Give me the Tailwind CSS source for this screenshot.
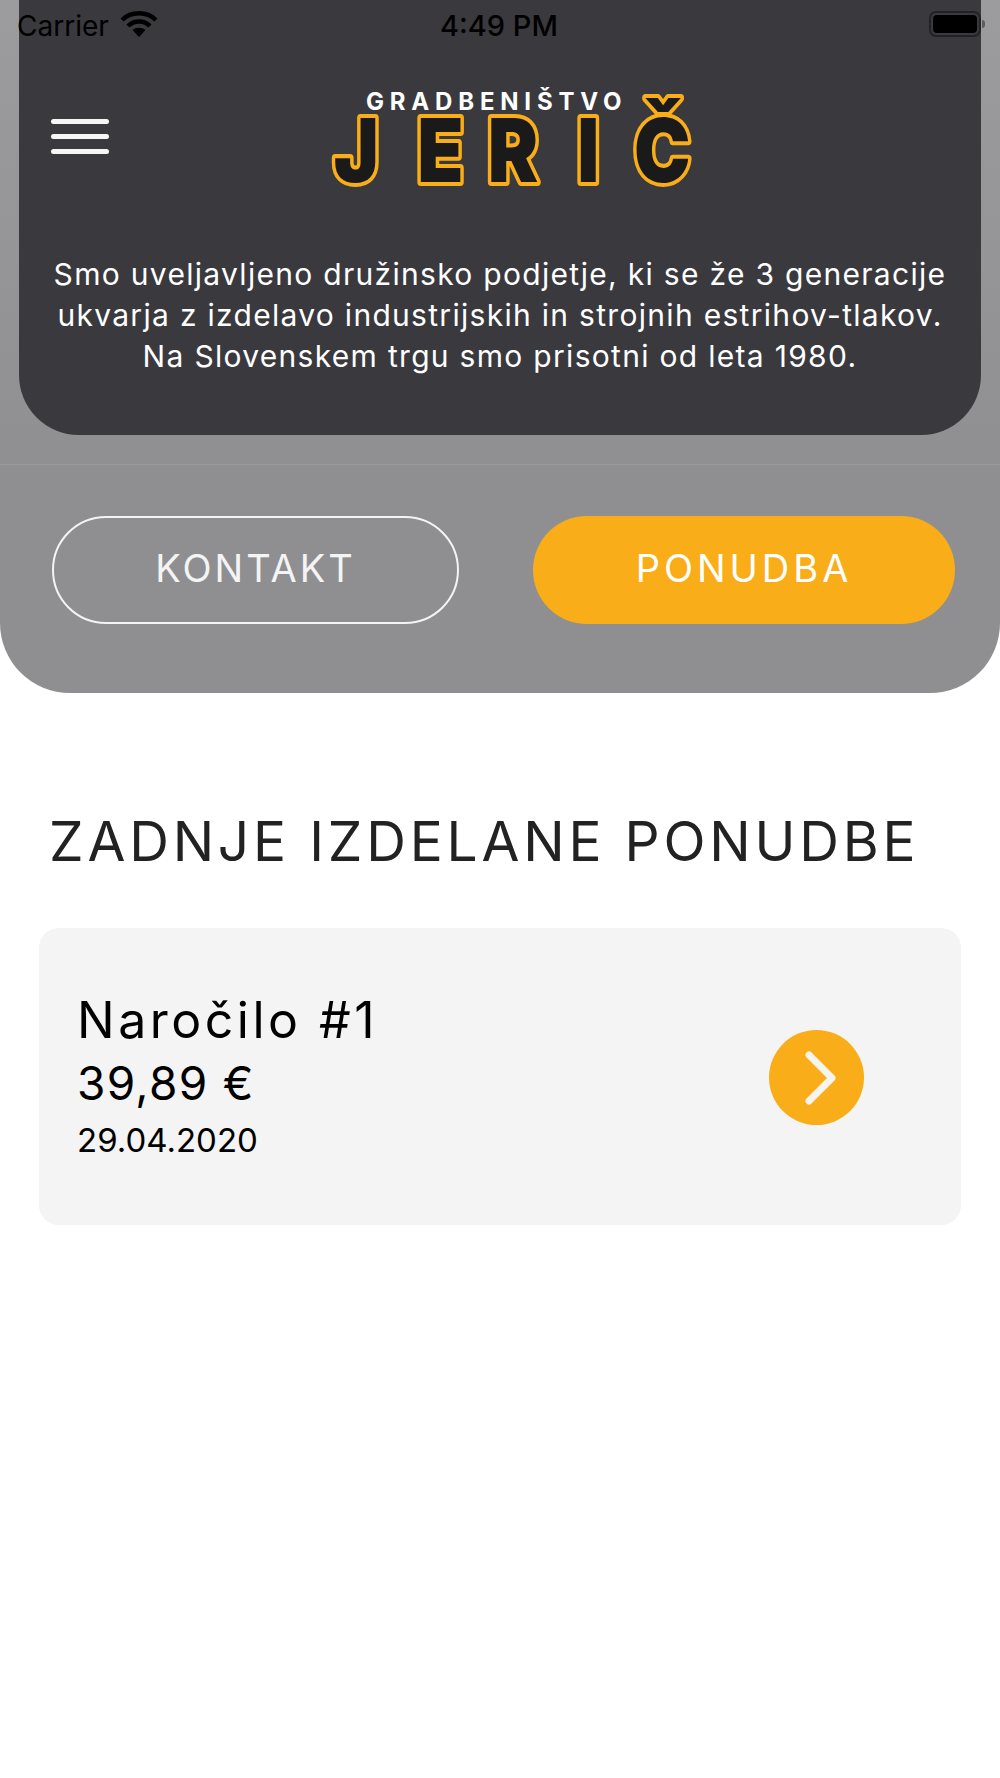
<!DOCTYPE html>
<html lang="en">
<head>
    <meta charset="UTF-8">
    <meta name="viewport" content="width=device-width, initial-scale=1.0">
    <title>Gradbeništvo Jerič</title>
    <script src="https://cdn.jsdelivr.net/npm/@tailwindcss/browser@4"></script>
</head>
<body class="bg-white font-['Inter',sans-serif]">
<div class="relative w-[1000px] h-[1778px] overflow-hidden">
    <!-- status bar -->
    <div class="absolute top-0 left-0 w-full h-[50px] text-black">
        <span class="absolute left-[17px] top-[10px] text-[28px] leading-[32px]">Carrier</span>
        <svg class="absolute left-[120px] top-[10px]" width="38" height="28" viewBox="0 0 38 28" fill="none" stroke="#000" stroke-width="4.5">
            <path d="M2 10 C11 1 27 1 36 10"/>
            <path d="M8 16 C14 10 24 10 30 16"/>
            <path d="M19 27 L12.5 20 C16 17 22 17 25.5 20 Z" fill="#000" stroke="none"/>
        </svg>
        <span class="absolute left-[440px] top-[10px] text-[29px] leading-[32px] font-medium">4:49 PM</span>
        <div class="absolute left-[929px] top-[11px] w-[52px] h-[26px] rounded-[7px] border-2 border-black/40 p-[2px]">
            <div class="w-full h-full rounded-[4px] bg-black"></div>
        </div>
        <div class="absolute left-[982px] top-[20px] w-[3px] h-[8px] rounded-r-full bg-black/40"></div>
    </div>

    <!-- hero -->
    <div class="h-[693px] rounded-b-[70px] bg-gradient-to-b from-[#9c9c9e] to-[#8f8f91] to-[70%]">
        <div class="mx-[19px] h-[435px] rounded-b-[60px] bg-[#3a393e] flex flex-col">
            <div class="flex items-start pt-[92px] pl-[32px]">
                <div class="flex flex-col gap-[10px] w-[58px] mt-[27px] shrink-0">
                    <div class="h-[5px] bg-[#f6f6f6] rounded-full"></div>
                    <div class="h-[5px] bg-[#f6f6f6] rounded-full"></div>
                    <div class="h-[5px] bg-[#f6f6f6] rounded-full"></div>
                </div>
                <div class="ml-[224px] w-[362px] flex flex-col items-start">
                    <div class="ml-[33px] font-bold text-white text-[24px] leading-[20px] tracking-[5.8px] whitespace-nowrap">GRADBENIŠTVO</div>
                    <svg class="block mt-[-20px] overflow-visible" width="375" height="98" viewBox="0 0 375 98">
                        <text transform="scale(.86 1)" y="90" x="1 98 180 284 350" font-family="Inter" font-weight="900" font-size="88" fill="#1a1a1a" stroke="#f9ad18" stroke-width="8" stroke-linejoin="round" paint-order="stroke">JERIČ</text>
                    </svg>
                </div>
            </div>
            <p class="mt-[64px] text-center text-white text-[30px] leading-[41px] tracking-[1.3px] whitespace-nowrap">Smo uveljavljeno družinsko podjetje, ki se že 3 generacije<br>ukvarja z izdelavo industrijskih in strojnih estrihov-tlakov.<br>Na Slovenskem trgu smo prisotni od leta 1980.</p>
        </div>
        <div class="h-px mt-[29px] bg-white/10"></div>
        <div class="flex pl-[52px] mt-[51px] gap-[74px]">
            <div class="w-[407px] h-[108px] rounded-[54px] border-2 border-[#f4f4f4] flex items-center justify-center pb-[3px] text-[#f4f4f4] text-[38px] tracking-[3px]">KONTAKT</div>
            <div class="w-[422px] h-[108px] rounded-[54px] bg-[#f9ad18] flex items-center justify-center pb-[3px] text-white text-[38px] tracking-[4px]">PONUDBA</div>
        </div>
    </div>

    <!-- last offers -->
    <h2 class="mt-[116px] ml-[49px] text-[55px] leading-[64px] tracking-[3.8px] text-[#222] whitespace-nowrap">ZADNJE IZDELANE PONUDBE</h2>
    <div class="mt-[55px] mx-[39px] h-[297px] rounded-[20px] bg-[#f4f4f4] flex items-center justify-between pl-[38px] pr-[97px]">
        <div class="text-black">
            <div class="text-[50px] leading-[60px] tracking-[3.5px]">Naročilo #1</div>
            <div class="text-[46px] leading-[66px] tracking-[1.3px]">39,89 €</div>
            <div class="text-[33px] leading-[48px]">29.04.2020</div>
        </div>
        <div class="w-[95px] h-[95px] mt-[2px] rounded-full bg-[#f9ad18] flex items-center justify-center pl-[6px]">
            <svg width="34" height="54" viewBox="0 0 34 54" fill="none" stroke="#f7f4ee" stroke-width="7" stroke-linecap="round" stroke-linejoin="round"><path d="M6 4 L29 27 L6 50"/></svg>
        </div>
    </div>
</div>
</body>
</html>
